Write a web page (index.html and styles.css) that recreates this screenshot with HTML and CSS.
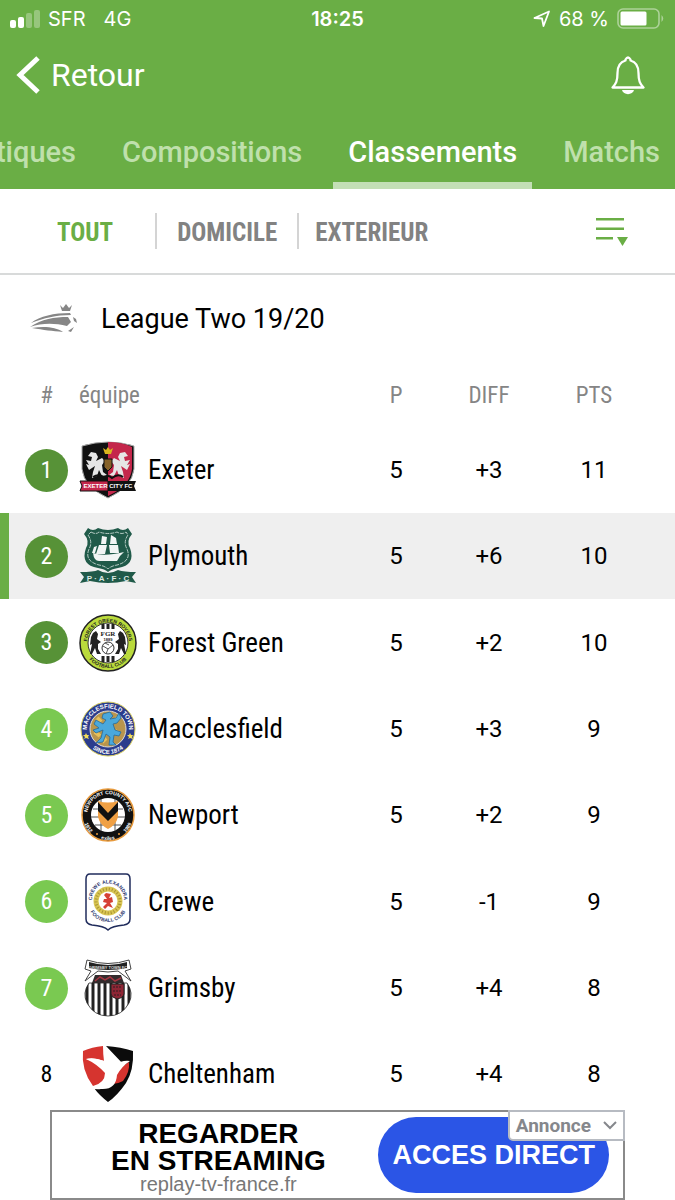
FILE: index.html
```html
<!DOCTYPE html>
<html lang="fr">
  <head>
    <meta charset="UTF-8" />
    <meta name="viewport" content="width=device-width, initial-scale=1.0" />
    <title>Classements</title>
    <link rel="stylesheet" href="styles.css" />
  </head>
  <body>
    <header class="header">
      <div class="status">
        <div class="status-left">
          <svg class="signal" width="30" height="18" viewBox="0 0 30 18" fill="#fff">
            <rect x="0" y="10" width="6" height="8" rx="2" />
            <rect x="8" y="7" width="6" height="11" rx="2" />
            <rect x="16" y="3" width="6" height="15" rx="2" opacity="0.3" />
            <rect x="24" y="0" width="6" height="18" rx="2" opacity="0.3" />
          </svg>
          <span>SFR</span>
          <span class="network">4G</span>
        </div>
        <time class="clock">18:25</time>
        <div class="status-right">
          <svg width="18" height="18" viewBox="0 0 18 18" fill="none" stroke="#fff" stroke-width="1.8" stroke-linejoin="round">
            <path d="M1.500 8 L16 1.500 L10.500 16 L9 8.500 Z" />
          </svg>
          <span>68 %</span>
          <svg width="48" height="22" viewBox="0 0 48 22">
            <rect x="1" y="1" width="41" height="19" rx="5" fill="none" stroke="#fff" stroke-width="1.600" opacity="0.45" />
            <rect x="3.500" y="3.500" width="26" height="14" rx="1.500" fill="#fff" />
            <path d="M44.500 7 Q48 10.500 44.500 14 Z" fill="#fff" opacity="0.45" />
          </svg>
        </div>
      </div>

      <div class="topbar">
        <a class="back" href="#">
          <svg width="24" height="38" viewBox="0 0 24 38" fill="none" stroke="#fff" stroke-width="5">
            <path d="M22 2 L4 19 L22 36" />
          </svg>
          Retour
        </a>
        <button class="bell" type="button" aria-label="Notifications">
          <svg width="34" height="39" viewBox="0 0 34 39" fill="none" stroke="#fff" stroke-width="2.300" stroke-linejoin="round">
            <path d="M1.500 31.500 C5 28 6.500 25 6.500 17 C6.500 9.500 9 6 14.500 4.500 V3.500 Q17 -0.500 19.500 3.500 V4.500 C25 6 27.500 9.500 27.500 17 C27.500 25 29 28 32.500 31.500 Z" />
            <path d="M11 34 H23 C22 39.500 12 39.500 11 34 Z" fill="#fff" stroke="none" />
          </svg>
        </button>
      </div>

      <nav class="tabs">
        <a href="#">Statistiques</a>
        <a href="#">Compositions</a>
        <a class="active" href="#">Classements</a>
        <a href="#">Matchs</a>
      </nav>
    </header>

    <div class="filters">
      <button class="active" type="button">TOUT</button>
      <button type="button">DOMICILE</button>
      <button class="away" type="button">EXTERIEUR</button>
      <button class="sort" type="button" aria-label="Trier">
        <svg width="32" height="30" viewBox="0 0 32 30" fill="#6aae45">
          <rect x="0" y="2" width="28" height="2.500" />
          <rect x="0" y="11.500" width="28" height="2.500" />
          <rect x="0" y="21" width="17" height="2.500" />
          <path d="M21 21 H32 L26.500 30 Z" />
        </svg>
      </button>
    </div>

    <main>
      <h1 class="league">
        <svg width="48" height="30" viewBox="0 0 48 30" fill="#868686">
          <path d="M30 1 L33 4 L36 0 L39 4 L42 1 L40 7 H32 Z" />
          <path d="M1 19 C10 12 24 9 40 9 L41 11 C26 11 14 14 1 19 Z" />
          <path d="M0 23 C12 15 24 13 38 13 L41 18 L37 22 C24 19 12 19 0 23 Z" />
          <path d="M2 24 C14 22 26 23 33 28 C22 27 14 26 2 24 Z" />
          <path d="M43 13 L46 15 L47 19 L44 17 Z M38 27 L44 23 L41 28 Z" />
        </svg>
        League Two 19/20
      </h1>

      <table class="standings">
        <thead>
          <tr>
            <th class="rank">#</th>
            <th class="crest"><span>équipe</span></th>
            <th class="name"></th>
            <th class="played">P</th>
            <th class="diff">DIFF</th>
            <th class="points">PTS</th>
          </tr>
        </thead>
        <tbody>
          <tr>
            <td class="rank"><span class="badge dark">1</span></td>
            <td class="crest">
              <svg width="58" height="58" viewBox="0 0 58 58">
                <path d="M3 5 Q29 -3 55 5 V28 Q53 46 29 57 Q5 46 3 28 Z" fill="#111" stroke="#aaa" />
                <path d="M29 1 Q43 1 53 6 V28 Q51 45 29 55 Z" fill="#c4274b" />
                <path d="M9 15 L12 11 L17 12 L19 16 L17 20 L23 17 L26 20 L23 24 L24 31 L28 34 L23 35 L20 29 L18 35 L13 37 L14 31 L16 25 L10 29 L7 23 L10 24 L7 19 L12 20 L13 16 Z M49 15 L46 11 L41 12 L39 16 L41 20 L35 17 L32 20 L35 24 L34 31 L30 34 L35 35 L38 29 L40 35 L45 37 L44 31 L42 25 L48 29 L51 23 L48 24 L51 19 L46 20 L45 16 Z" fill="#e6e6e6" />
                <path d="M24 7 L27 9 L29 6 L31 9 L34 7 L32 13 H26 Z" fill="#d9b51e" />
                <path d="M25 18 H33 V26 L29 30 L25 26 Z" fill="#866229" stroke="#111" />
                <path d="M14 36 Q20 32 26 37 Q29 33 33 37 Q39 32 44 36" fill="none" stroke="#111" stroke-width="2" />
                <path d="M1 40 H29 V50 H1 L3 45 Z" fill="#c4274b" stroke="#111" />
                <path d="M29 40 H57 L55 45 L57 50 H29 Z" fill="#111" />
                <text x="29" y="47" class="crest-text" font-size="6" fill="#fff">EXETER CITY FC</text>
              </svg>
            </td>
            <td class="name">Exeter</td>
            <td>5</td>
            <td>+3</td>
            <td>11</td>
          </tr>
          <tr class="selected">
            <td class="rank"><span class="badge dark">2</span></td>
            <td class="crest">
              <svg width="58" height="58" viewBox="0 0 58 58">
                <path d="M9 1 Q14 5 19 1 Q29 5 39 1 Q44 5 49 1 L53 7 Q47 14 51 21 Q57 38 39 41 Q32 42 29 45 Q26 42 19 41 Q1 38 7 21 Q11 14 5 7 Z" fill="#205a49" />
                <path d="M12 5 Q17 8 20 5 Q29 8 38 5 Q43 8 47 5 L49 8 Q44 15 48 22 Q53 34 38 38 Q32 39 29 42 Q26 39 20 38 Q5 34 10 22 Q14 15 9 8 Z" fill="none" stroke="#d8e4df" stroke-width="0.800" stroke-dasharray="4 1" />
                <path d="M14 26 Q25 30 45 25 L41 29 L38 34 H20 Q15 34 14 26 Z M23 9 L28 10 L27 17 H22 Z M32 8 L37 11 L38 17 H31 Z M20 18 H28 L26 27 H17 Z M30 18 H39 L40 26 H31 Z M15 20 L18 19 L16 26 H13 Z" fill="#f2f5f4" />
                <path d="M1 45 Q15 45 19 43 Q29 49 39 43 Q45 45 57 45 L53 50 L57 56 L47 54 Q29 58 11 54 L1 56 L5 50 Z" fill="#205a49" />
                <text x="29" y="54" class="crest-text" font-size="8" fill="#dce8e3">P · A · F · C</text>
              </svg>
            </td>
            <td class="name">Plymouth</td>
            <td>5</td>
            <td>+6</td>
            <td>10</td>
          </tr>
          <tr>
            <td class="rank"><span class="badge dark">3</span></td>
            <td class="crest">
              <svg width="58" height="58" viewBox="0 0 58 58">
                <defs>
                  <path id="arc-top" d="M11 40 A21 21 0 1 1 47 40" />
                  <path id="arc-bottom" d="M5 22 A25 25 0 1 0 53 22" />
                </defs>
                <circle cx="29" cy="29" r="28" fill="#bada3c" stroke="#222" stroke-width="1.500" />
                <circle cx="29" cy="29" r="20" fill="#fff" stroke="#333" />
                <path d="M24 10 V15 M29 10 V15 M34 10 V15 M24 42 V48 M29 42 V48 M34 42 V48" stroke="#222" stroke-width="3" />
                <path d="M14 19 L17 17 L19 20 L18 25 L22 28 L19 30 L19 35 L22 40 H18 L16 34 L13 40 H11 L13 30 L11 31 L12 23 Z M44 19 L41 17 L39 20 L40 25 L36 28 L39 30 L39 35 L36 40 H40 L42 34 L45 40 H47 L45 30 L47 31 L46 23 Z" fill="#222" />
                <circle cx="29" cy="34" r="6" fill="#fff" stroke="#333" />
                <path d="M24 32 L29 35 L34 31 M29 35 L27 40 M26 29 L30 31" stroke="#555" fill="none" />
                <text x="29" y="22" class="crest-serif" font-size="7" fill="#222">FGR</text>
                <text x="29" y="27" class="crest-text" font-size="4" fill="#222">1889</text>
                <text class="crest-text" font-size="5" fill="#222"><textPath href="#arc-top" startOffset="50%">FOREST GREEN ROVERS</textPath></text>
                <text class="crest-text" font-size="5" fill="#222"><textPath href="#arc-bottom" startOffset="50%">FOOTBALL CLUB</textPath></text>
              </svg>
            </td>
            <td class="name">Forest Green</td>
            <td>5</td>
            <td>+2</td>
            <td>10</td>
          </tr>
          <tr>
            <td class="rank"><span class="badge">4</span></td>
            <td class="crest">
              <svg width="58" height="58" viewBox="0 0 58 58">
                <circle cx="29" cy="29" r="27" fill="#2b3c8c" stroke="#d8ce60" />
                <circle cx="29" cy="29" r="18" fill="#b9954d" stroke="#ddd" />
                <path d="M18 18 L22 22 M39 17 L35 22 M16 32 L21 36 M41 34 L36 31 M23 42 L27 38" stroke="#e8c05a" stroke-width="4" />
                <path d="M24 14 L31 12 L34 16 L31 19 L37 18 L40 13 L42 18 L38 23 L34 24 L36 30 L42 32 L40 36 L35 35 L34 42 L37 45 H30 L31 37 L27 34 L24 42 L17 43 L22 38 L24 30 L17 33 L14 30 L20 28 L15 24 L17 20 L24 24 L27 20 L23 18 Z" fill="#4aa8dc" stroke="#246a9c" stroke-width="0.800" />
                <path d="M7 33 L8 35 L10 35 L9 37 L10 39 L7 38 L5 39 L6 37 L4 35 L6 35 Z M51 33 L52 35 L54 35 L53 37 L54 39 L51 38 L49 39 L50 37 L48 35 L50 35 Z" fill="#f1dc59" />
                <text class="crest-text" font-size="6" fill="#fff"><textPath href="#arc-top" startOffset="50%">MACCLESFIELD TOWN</textPath></text>
                <text class="crest-text" font-size="6" fill="#fff"><textPath href="#arc-bottom" startOffset="50%">SINCE 1874</textPath></text>
              </svg>
            </td>
            <td class="name">Macclesfield</td>
            <td>5</td>
            <td>+3</td>
            <td>9</td>
          </tr>
          <tr>
            <td class="rank"><span class="badge">5</span></td>
            <td class="crest">
              <svg width="58" height="58" viewBox="0 0 58 58">
                <circle cx="29" cy="29" r="26" fill="#111" stroke="#e79a3d" stroke-width="1.500" />
                <circle cx="29" cy="29" r="17" fill="#fff" />
                <path d="M14 23 H44 M12 31 H46 M16 39 H42 M22 13 V45 M36 13 V45" stroke="#555" stroke-width="1" />
                <path d="M19 15 Q29 18 39 15 V31 Q37 39 29 43 Q21 39 19 31 Z" fill="#f0a044" />
                <path d="M19 16 L29 27 L39 16 V25 L29 35 L19 25 Z" fill="#111" />
                <text class="crest-text" font-size="5" fill="#fff"><textPath href="#arc-top" startOffset="50%">NEWPORT COUNTY AFC</textPath></text>
                <text class="crest-text" font-size="5" fill="#fff"><textPath href="#arc-bottom" startOffset="23%">1912</textPath></text>
                <text class="crest-text" font-size="5" fill="#fff"><textPath href="#arc-bottom" startOffset="50%">exiles</textPath></text>
                <text class="crest-text" font-size="5" fill="#fff"><textPath href="#arc-bottom" startOffset="77%">1989</textPath></text>
                <circle cx="18" cy="48" r="1" fill="#e79a3d" />
                <circle cx="40" cy="48" r="1" fill="#e79a3d" />
              </svg>
            </td>
            <td class="name">Newport</td>
            <td>5</td>
            <td>+2</td>
            <td>9</td>
          </tr>
          <tr>
            <td class="rank"><span class="badge">6</span></td>
            <td class="crest">
              <svg width="58" height="58" viewBox="0 0 58 58">
                <defs>
                  <path id="crewe-top" d="M14 32 A16 16 0 1 1 44 32" />
                  <path id="crewe-bottom" d="M9 29 A20 20 0 0 0 49 29" />
                </defs>
                <path d="M11 1 H47 Q51 1 51 6 V46 Q51 51 45 52 Q33 53 29 57 Q25 53 13 52 Q7 51 7 46 V6 Q7 1 11 1 Z" fill="#fff" stroke="#202c5c" stroke-width="1.500" />
                <circle cx="29" cy="28" r="12" fill="none" stroke="#d9c653" stroke-width="5" />
                <circle cx="29" cy="28" r="12" fill="none" stroke="#a99335" stroke-width="3" stroke-dasharray="1 2" />
                <path d="M27 20 L32 21 L30 25 L33 24 L34 29 L31 30 L34 35 L29 33 L26 36 L24 34 L28 30 L24 29 L25 26 L28 26 L25 22 Z" fill="#d64135" />
                <text class="crest-text" font-size="5" fill="#2d3870"><textPath href="#crewe-top" startOffset="50%">CREWE ALEXANDRA</textPath></text>
                <text class="crest-text" font-size="5" fill="#2d3870"><textPath href="#crewe-bottom" startOffset="50%">FOOTBALL CLUB</textPath></text>
              </svg>
            </td>
            <td class="name">Crewe</td>
            <td>5</td>
            <td>-1</td>
            <td>9</td>
          </tr>
          <tr>
            <td class="rank"><span class="badge">7</span></td>
            <td class="crest">
              <svg width="58" height="58" viewBox="0 0 58 58">
                <defs>
                  <clipPath id="grimsby"><path d="M10 24 H48 Q55 34 50 44 Q43 57 29 57 Q15 57 8 44 Q3 34 10 24 Z" /></clipPath>
                </defs>
                <path d="M10 24 H48 Q55 34 50 44 Q43 57 29 57 Q15 57 8 44 Q3 34 10 24 Z" fill="#fff" stroke="#555" />
                <path clip-path="url(#grimsby)" d="M8 24 V58 M14 24 V58 M20 24 V58 M26 24 V58 M32 24 V58 M38 24 V58 M44 24 V58 M50 24 V58" stroke="#222" stroke-width="3" />
                <path d="M16 16 H42 L45 24 H13 Z" fill="#332c2d" />
                <path d="M16 22 L21 18 L26 21 L31 18 L36 22 L42 19" fill="none" stroke="#a33642" stroke-width="1.500" />
                <path d="M32 25 H45 V35 Q44 39 38 40 Q32 38 32 35 Z" fill="#8e2635" stroke="#222" />
                <path d="M34 28 H43 M34 32 H43 M35 36 H42" stroke="#301d22" stroke-dasharray="2 1" />
                <path d="M8 1 Q29 8 50 1 L52 10 L46 12 L52 22 L39 12 Q29 14 19 12 L6 22 L12 12 L6 10 Z" fill="#fff" stroke="#444" />
                <path d="M10 3 Q29 9 48 3 L48 9 Q29 13 10 9 Z" fill="#222" />
                <text x="29" y="10" class="crest-text" font-size="4" fill="#ddd">GRIMSBY TOWN FC</text>
              </svg>
            </td>
            <td class="name">Grimsby</td>
            <td>5</td>
            <td>+4</td>
            <td>8</td>
          </tr>
          <tr>
            <td class="rank">8</td>
            <td class="crest">
              <svg width="58" height="58" viewBox="0 0 58 58">
                <path d="M27 1 Q42 2 54 6 Q55 25 47 38 Q38 51 29 57 Q20 50 15 43 Q32 45 38 34 L45 20 Z" fill="#0b0b0b" />
                <path d="M4 6 Q13 2 24 1 Q24 9 25 16 Q15 12 7 14 Q18 19 26 28 Q26 38 14 41 Q2 25 4 6 Z" fill="#d6342f" />
                <path d="M50 17 Q51 27 44 36 Q39 39 33 39 Q34 26 50 17 Z" fill="#d6342f" />
                <path d="M24 1 Q34 9 37 20 Q42 15 51 16 Q43 21 38 30 Q37 45 22 44 Q17 45 12 43 Q25 41 27 28 Q18 16 7 14 Q16 12 28 17 Q28 8 24 1 Z" fill="#fff" />
              </svg>
            </td>
            <td class="name">Cheltenham</td>
            <td>5</td>
            <td>+4</td>
            <td>8</td>
          </tr>
        </tbody>
      </table>
    </main>

    <aside class="ad">
      <p class="ad-text">
        <strong>REGARDER<br />EN STREAMING</strong>
        <span>replay-tv-france.fr</span>
      </p>
      <a class="ad-link" href="#">ACCES DIRECT</a>
      <button class="ad-label" type="button">
        Annonce
        <svg width="14" height="9" viewBox="0 0 14 9" fill="none" stroke="#85878c" stroke-width="2">
          <path d="M1 1 L7 7 L13 1" />
        </svg>
      </button>
    </aside>
  </body>
</html>
```
FILE: styles.css
```css
* {
  box-sizing: border-box;
}

body {
  margin: 0;
  background-color: #fff;
  color: #000;
  font-family: Roboto, sans-serif;
}

svg {
  display: block;
  flex: none;
}

a {
  color: inherit;
  text-decoration: none;
}

button {
  padding: 0;
  border: none;
  background: none;
  color: inherit;
  font: inherit;
  cursor: pointer;
}

.header {
  background-color: #6aae45;
  color: #fff;
  overflow: hidden;
}

.status {
  display: grid;
  grid-template-columns: 1fr auto 1fr;
  align-items: center;
  height: 38px;
  padding: 0 10px;
  font-family: Inter, sans-serif;
  font-size: 20px;
}

.status-left,
.status-right {
  display: flex;
  align-items: center;
  gap: 8px;
}

.status-right {
  justify-content: flex-end;
}

.network {
  margin-left: 10px;
}

.clock {
  font-weight: 600;
}

.topbar {
  display: flex;
  justify-content: space-between;
  align-items: center;
  height: 74px;
  padding: 0 30px 0 16px;
}

.back {
  display: flex;
  align-items: center;
  gap: 11px;
  font-size: 32px;
}

.tabs {
  display: flex;
  justify-content: flex-end;
  gap: 16px;
}

.tabs a {
  padding: 10px 15px 0;
  border-bottom: 7px solid transparent;
  color: #bfe0ac;
  font-size: 29px;
  font-weight: 500;
  line-height: 60px;
}

.tabs .active {
  border-color: #c3dfb5;
  color: #fff;
}

.filters {
  display: flex;
  align-items: center;
  height: 86px;
  border-bottom: 2px solid #d8dada;
  color: #828282;
  font-family: "Roboto Condensed", "Liberation Sans Narrow", Roboto, sans-serif;
  font-size: 25px;
  font-weight: 700;
}

.filters button {
  height: 36px;
  padding: 2px 20px 0;
}

.filters button + button {
  border-left: 2px solid #d4d4d4;
}

.filters .active {
  padding-right: 42px;
  padding-left: 57px;
  color: #6aae45;
}

.filters .away {
  padding-left: 16px;
}

.filters .sort {
  margin-left: auto;
  padding: 0 47px 0 0;
  border: none;
}

.league {
  display: flex;
  align-items: center;
  gap: 23px;
  height: 88px;
  margin: 0;
  padding-left: 30px;
  font-size: 27px;
  font-weight: 400;
}

.standings {
  width: 100%;
  border-collapse: collapse;
  table-layout: fixed;
  font-size: 24px;
  text-align: center;
}

.standings th {
  height: 64px;
  padding: 0;
  color: #858585;
  font-family: "Roboto Condensed", "Liberation Sans Narrow", Roboto, sans-serif;
  font-size: 23px;
  font-weight: 400;
}

.standings td {
  height: 86px;
  padding: 0;
}

.standings tr:nth-child(3n) td {
  height: 87px;
}

.standings .rank {
  width: 79px;
  padding-left: 14px;
  font-family: "Roboto Condensed", "Liberation Sans Narrow", Roboto, sans-serif;
}

.standings .crest {
  width: 69px;
  text-align: left;
}

.standings .name {
  font-family: "Roboto Condensed", "Liberation Sans Narrow", Roboto, sans-serif;
  font-size: 27px;
  text-align: left;
}

.standings .played {
  width: 90px;
}

.standings .diff {
  width: 96px;
}

.standings .points {
  width: 138px;
}

.standings .points,
.standings td:last-child {
  padding-right: 24px;
}

.selected {
  background-color: #efefef;
  box-shadow: inset 9px 0 #6aae45;
}

.badge {
  display: block;
  width: 43px;
  margin: 0 auto;
  border-radius: 50%;
  background-color: #7ac951;
  color: #fff;
  line-height: 43px;
}

.badge.dark {
  background-color: #579237;
}

.crest-text {
  font-family: "Liberation Sans", sans-serif;
  font-weight: 700;
  text-anchor: middle;
}

.crest-serif {
  font-family: "Liberation Serif", serif;
  font-weight: 700;
  text-anchor: middle;
}

/* banner stays over the list */
.ad {
  position: fixed;
  right: 50px;
  bottom: 0;
  left: 50px;
  display: flex;
  justify-content: space-between;
  align-items: center;
  height: 90px;
  padding: 0 14px 0 59px;
  border: 2px solid #8a8a8a;
  background-color: #fff;
  font-family: "Liberation Sans", sans-serif;
}

.ad-text {
  margin: 0;
  padding-top: 3px;
  text-align: center;
}

.ad-text strong {
  display: block;
  font-size: 28px;
  line-height: 27px;
}

.ad-text span {
  display: block;
  color: #777;
  font-size: 20px;
  line-height: 20px;
}

.ad-link {
  padding: 0 14px;
  border-radius: 38px;
  background-color: #2b55e6;
  color: #fff;
  font-size: 27px;
  font-weight: 700;
  line-height: 76px;
}

.ad .ad-label {
  position: absolute;
  top: -2px;
  right: -2px;
  display: flex;
  align-items: center;
  gap: 12px;
  height: 31px;
  padding: 0 6px;
  border: 2px solid #b7bbc2;
  border-radius: 0 0 0 5px;
  background-color: #fff;
  color: #85878c;
  font-family: Roboto, sans-serif;
  font-size: 19px;
  font-weight: 700;
}
```
